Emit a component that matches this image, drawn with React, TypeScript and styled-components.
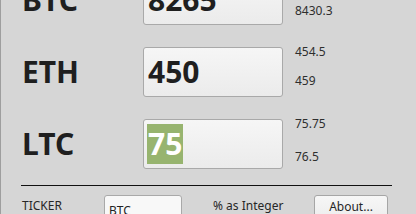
import styled, { createGlobalStyle } from "styled-components";

type Quote = {
  ticker: string;
  value: string;
  high: string;
  low: string;
  spread: number;
  selected?: boolean;
};

const quotes: Quote[] = [
  { ticker: "BTC", value: "8265", high: "8347.7", low: "8430.3", spread: 15 },
  { ticker: "ETH", value: "450", high: "454.5", low: "459", spread: 13 },
  { ticker: "LTC", value: "75", high: "75.75", low: "76.5", spread: 17, selected: true },
];

const GlobalStyle = createGlobalStyle`
  html, body {
    margin: 0;
    padding: 0;
    background: #d6d6d6;
  }
`;

const App = () => {
  return (
    <>
      <GlobalStyle />
      <Window>
        <Rows>
          {quotes.map((q) => (
            <Row key={q.ticker}>
              <Ticker>{q.ticker}</Ticker>
              <Field>
                <Value selected={q.selected}>{q.value}</Value>
              </Field>
              <Prices spread={q.spread}>
                <Price>{q.high}</Price>
                <Price>{q.low}</Price>
              </Prices>
            </Row>
          ))}
        </Rows>
        <Separator />
        <Footer>
          <Caption width={82}>TICKER</Caption>
          <TickerInput>BTC</TickerInput>
          <Caption width={101} indent={31}>
            % as Integer
          </Caption>
          <Button>About...</Button>
        </Footer>
      </Window>
    </>
  );
};

export default App;

const Window = styled.div`
  width: 416px;
  height: 214px;
  overflow: hidden;
  box-sizing: border-box;
  background: #d6d6d6;
  border-left: 1px solid #9e9e9e;
  font-family: "Noto Sans", "Open Sans", sans-serif;
  color: #1e1e1e;
`;

const Rows = styled.div`
  display: flex;
  flex-direction: column;
  gap: 22px;
  margin-top: -25px;
  padding-left: 20px;
`;

const Row = styled.div`
  display: grid;
  grid-template-columns: 110px 140px 1fr;
  column-gap: 12px;
  height: 50px;
  align-items: center;
`;

const Ticker = styled.div`
  font-size: 30px;
  font-weight: 700;
  line-height: 40px;
  padding-left: 1px;
  color: #1f1f1f;
`;

const Field = styled.div`
  height: 50px;
  box-sizing: border-box;
  display: flex;
  align-items: center;
  padding-left: 3px;
  border: 1px solid #a9a9a9;
  border-radius: 3px;
  background: linear-gradient(#f6f6f6, #ebebeb);
`;

const Value = styled.span<{ selected?: boolean }>`
  font-size: 30px;
  font-weight: 700;
  line-height: 40px;
  padding: 0 1px;
  color: ${(p) => (p.selected ? "#ffffff" : "#1f1f1f")};
  background: ${(p) => (p.selected ? "#97b46f" : "transparent")};
`;

const Prices = styled.div<{ spread: number }>`
  align-self: stretch;
  display: flex;
  flex-direction: column;
  gap: ${(p) => p.spread}px;
  margin-top: -3px;
`;

const Price = styled.div`
  font-size: 12px;
  line-height: 16px;
  color: #2e2e2e;
`;

const Separator = styled.div`
  width: 371px;
  height: 1px;
  margin: 16px 0 0 20px;
  background: #111111;
`;

const Footer = styled.div`
  display: flex;
  align-items: flex-start;
  margin-top: 9px;
  padding-left: 21px;
  font-size: 12px;
`;

const Caption = styled.div<{ width: number; indent?: number }>`
  width: ${(p) => p.width}px;
  margin-left: ${(p) => p.indent ?? 0}px;
  margin-top: 3px;
  line-height: 16px;
  color: #262626;
`;

const TickerInput = styled.div`
  width: 78px;
  height: 26px;
  box-sizing: border-box;
  padding: 7px 0 0 4px;
  line-height: 16px;
  border: 1px solid #a9a9a9;
  border-radius: 3px;
  background: #f8f8f8;
  color: #222222;
`;

const Button = styled.div`
  width: 74px;
  height: 26px;
  box-sizing: border-box;
  padding-top: 3px;
  text-align: center;
  line-height: 16px;
  border: 1px solid #a6a6a6;
  border-radius: 3px;
  background: linear-gradient(#f7f7f7, #ececec);
  color: #262626;
`;
